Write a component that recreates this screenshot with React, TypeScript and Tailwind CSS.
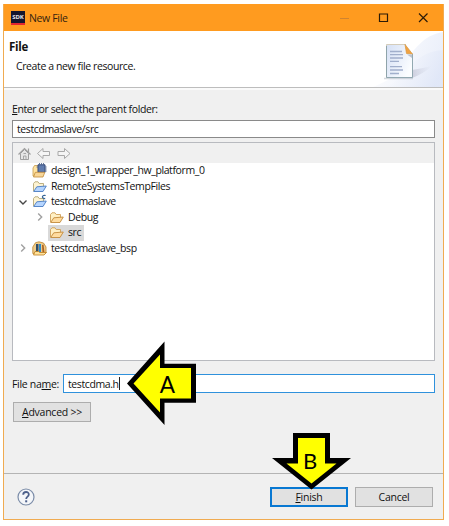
import type { ReactNode } from "react";

function SdkIcon() {
  return (
    <div className="flex h-[14px] w-[14px] flex-col bg-[#15162e]">
      <div className="flex h-[12px] items-center justify-center text-[6px] font-bold leading-none tracking-normal text-[#e4e4ea]">SDK</div>
      <div className="h-[2px] bg-[#e32530]" />
    </div>
  );
}

function WindowButtons() {
  return (
    <svg className="h-[26px] w-[110px]" viewBox="333 4 110 26" fill="none">
      <path d="M340 17.5h9" stroke="#d08430" />
      <path d="M379.5 13h8v7.5h-8z" stroke="#2b1b08" strokeWidth="1.2" />
      <path d="M419 12.5l8.5 8.5M427.5 12.5l-8.5 8.5" stroke="#2b1b08" strokeWidth="1.15" />
    </svg>
  );
}

function HeaderArt() {
  return (
    <svg className="h-[56px] w-[73px]" viewBox="370 31 73 56">
      <defs>
        <linearGradient id="sweep" x1="0" x2="1" y1="0.2" y2="0.5">
          <stop offset="0" stopColor="#ffffff" />
          <stop offset="1" stopColor="#dfe6f7" />
        </linearGradient>
        <linearGradient id="page" x1="0" x2="1" y1="0" y2="0.6">
          <stop offset="0" stopColor="#d5e0f5" />
          <stop offset="1" stopColor="#fbfdff" />
        </linearGradient>
        <linearGradient id="shade" x1="0" x2="1">
          <stop offset="0" stopColor="#a9a9bd" stopOpacity="0.8" />
          <stop offset="1" stopColor="#c5c9dc" stopOpacity="0" />
        </linearGradient>
      </defs>
      <path d="M443 32C423 35 414 50 402 66C396 78 384 82 373 87H443Z" fill="url(#sweep)" opacity="0.65" />
      <path d="M443 50C425 51 414 60 401 76C396 82 389 86 383 87H443Z" fill="url(#sweep)" opacity="0.85" />
      <path d="M412 70Q424 68 432 66Q423 74 412 78Z" fill="url(#shade)" opacity="0.6" />
      <path d="M384 78.5h29" stroke="#b8bfc8" strokeWidth="1.5" opacity="0.6" />
      <path d="M386.5 44.5H405.5L412.5 53V77.5H386.5Z" fill="url(#page)" />
      <path d="M386.5 77.5V44.5H406" fill="none" stroke="#d5cdbb" />
      <path d="M386.5 46V77.5H412.5V54" fill="none" stroke="#879fa8" strokeWidth="0.9" />
      <path d="M405 44.5L412.5 54L406.5 53.5Z" fill="#f1a344" stroke="#d9963c" strokeWidth="0.7" />
      <path d="M407 54.5L412 54.5V58Z" fill="#bac1d0" />
      <path d="M390 51.5h12M390 54.7h13M390 58h13M390 61.3h9M390 66.7h12M390 70h13M390 73.5h9" stroke="#a1afcc" strokeWidth="1.3" />
    </svg>
  );
}

function NavIcons() {
  return (
    <svg className="h-[20px] w-[66px]" viewBox="13 143 66 20" fill="none" stroke="#a0a0a0">
      <path d="M20.5 153.5v6h8v-6l-4-4Z" fill="#e6e6e6" />
      <path d="M18.5 154.5l6-6 6 6M28.500 148.5v4" strokeWidth="1.2" />
      <path d="M23.5 159.5v-3.500h2.500v3.500M23.500 153.500h2.500" strokeWidth="0.9" />
      <path d="M37.5 153.5l5.500-5v3h6.5v4H43v3Z" fill="#f5f5f5" stroke="#a9a9a9" />
      <path d="M70 153.5l-5.500-5v3H58v4h6.5v3Z" fill="#f5f5f5" stroke="#a9a9a9" />
    </svg>
  );
}

type FolderKind = "hardware" | "project" | "source" | "folder" | "bsp";

function FolderIcon({ kind }: { kind: FolderKind }) {
  if (kind === "hardware") {
    return (
      <svg className="h-[15px] w-[15px] shrink-0" viewBox="0 0 15 15">
        <path d="M1 13V5l1.5-2.500h4V13Z" fill="#ffe3a0" stroke="#c4994c" strokeWidth="0.8" />
        <path d="M6 1.8h7v7.500h-7z" fill="#607cae" stroke="#34497a" />
        <path d="M7.500 0v2M9.500 0v2M11.500 0v2M4.500 4h2M12.500 4h2.200M12.500 6h2.200M12.500 8h2.200" stroke="#53698f" strokeWidth="0.9" />
        <path d="M1.500 14L3.300 9.300h9.500L11 14Z" fill="#f8d698" stroke="#c08c38" strokeWidth="0.8" />
      </svg>
    );
  }
  if (kind === "bsp") {
    return (
      <svg className="h-[15px] w-[15px] shrink-0" viewBox="0 0 15 15">
        <path d="M.8 12.5V6l2.700-4.300L7 .8l4.500 1.200 2.500 4v6Z" fill="#efcc8b" stroke="#bd842b" strokeWidth="0.8" />
        <path d="M4 3h2.5v8H4z" fill="#304c68" />
        <path d="M7 3h2v8H7z" fill="#2e8bc9" />
        <path d="M10 4l1.5-.5 1 8h-2z" fill="#ac6221" />
        <path d="M1.500 14l1.500-3.500h3.500l1 1H14.500l-2.500 2.500Z" fill="#ffe29c" stroke="#bc7d20" strokeWidth="0.8" />
      </svg>
    );
  }
  const yellow = kind === "folder";
  return (
    <svg className="h-[15px] w-[15px] shrink-0" viewBox="0 0 15 15" strokeLinejoin="round" strokeWidth="0.9">
      <path d="M1.5 12V4.500l1.500-1.700h3l1.200 1.700h4.300v3.500" fill={yellow ? "#fff0c5" : "#fdf3d2"} stroke={yellow ? "#cf9f58" : "#b5a777"} />
      <path d="M1.700 12.500L4.800 7.800L14.300 7L11 12.500Z" fill={yellow ? "#ffdca0" : "#b5d5ff"} stroke={yellow ? "#c38b3c" : "#4a7cc2"} />
      {kind === "source" && <path d="M13.700 1.500C10 .3 9 5 13.200 4.500" fill="none" stroke="#376698" strokeWidth="1.3" />}
    </svg>
  );
}

function Chevron({ open }: { open: boolean }) {
  return (
    <svg className="h-[10px] w-[10px] shrink-0" viewBox="0 0 10 10" fill="none">
      <path d={open ? "M1.5 3.5L5 7L8.5 3.5" : "M3.2 1.5L6.7 5L3.2 8.5"} stroke={open ? "#484848" : "#a0a0a0"} strokeWidth="1.4" />
    </svg>
  );
}

function TreeRow({ kind, label, indent, open, selected }: {
  kind: FolderKind; label: string; indent: string; open?: boolean; selected?: boolean;
}) {
  return (
    <div className={"flex h-[15.5px] items-center " + indent}>
      <div className="w-[13px] shrink-0">{open !== undefined && <Chevron open={open} />}</div>
      <div className={"flex h-[15.5px] items-center gap-[4px] pl-[1px] pr-[3px] " + (selected ? "bg-[#d9d9d9]" : "")}>
        <FolderIcon kind={kind} />
        <span>{label}</span>
      </div>
    </div>
  );
}

function DialogButton({ children, primary }: { children: ReactNode; primary?: boolean }) {
  return (
    <button className={"flex h-[20px] w-[78px] items-center justify-center bg-[#e1e1e1] pt-px tracking-[-0.25px] " + (primary ? "border-2 border-[#0878d2]" : "border border-[#adadad]")}>
      {children}
    </button>
  );
}

function ArrowA() {
  return (
    <svg className="absolute left-[127px] top-[340px] h-[86px] w-[70px] tracking-normal" viewBox="127 340 70 86">
      <path d="M127 383.5L164.5 341.5V363.7H196V402.7H164.5V425Z" fill="#000" />
      <path d="M133.5 383.5L160 354.5V368H191V398.5H160V412.5Z" fill="#ff0" />
      <text x="167.3" y="393" textAnchor="middle" fontSize="22.5" fontFamily="Lato, sans-serif">A</text>
    </svg>
  );
}

function ArrowB() {
  return (
    <svg className="absolute left-[271px] top-[432px] h-[59px] w-[80px] tracking-normal" viewBox="271 432 80 59">
      <path d="M293 433H330V458H351L311.5 489.5L272 458H293Z" fill="#000" />
      <path d="M298 438H325V463.5H336.5L311.5 483.5L286.5 463.5H298Z" fill="#ff0" />
      <text x="310" y="468.8" textAnchor="middle" fontSize="22" fontFamily="Lato, sans-serif">B</text>
    </svg>
  );
}

export default function App() {
  return (
    <div className="relative h-[526px] w-[449px] overflow-hidden bg-white pl-[3px] pt-[4px] font-['Open_Sans','Noto_Sans',sans-serif] text-[10.5px] leading-[15px] tracking-[-0.4px] text-[#111]">
      <div className="flex h-[516px] w-[441px] flex-col border border-t-0 border-[#f0ab51] bg-[#f0f0f0]">
        <header className="flex h-[27px] shrink-0 items-center bg-[#ff9b1f] pl-[7px]">
          <SdkIcon />
          <span className="ml-[4px] pt-px tracking-[-0.35px] text-[#332310]">New File</span>
          <div className="ml-auto"><WindowButtons /></div>
        </header>
        <section className="flex h-[57px] shrink-0 justify-between border-b border-[#bdbdbd] bg-white pl-[5px]">
          <div className="pt-[8px]">
            <h1 className="text-[11.5px] font-bold tracking-[-0.3px]">File</h1>
            <p className="pl-[7px] pt-[5px]">Create a new file resource.</p>
          </div>
          <HeaderArt />
        </section>
        <div className="h-[2px] shrink-0 bg-[#fafafa]" />
        <main className="flex h-[384px] shrink-0 flex-col border-b border-[#b4b4b4] px-[8px] pt-[12px]">
          <label className="h-[18px]"><u>E</u>nter or select the parent folder:</label>
          <div className="flex h-[18px] shrink-0 items-center border border-[#8a8a8a] bg-white pl-[4px]"><span>testcdmaslave/src</span></div>
          <div className="mt-[4px] h-[219px] shrink-0 border border-[#b8babf] bg-white">
            <div className="h-[20px] bg-[#f0f0f0]"><NavIcons /></div>
            <div>
              <TreeRow kind="hardware" label="design_1_wrapper_hw_platform_0" indent="pl-[5px]" />
              <TreeRow kind="project" label="RemoteSystemsTempFiles" indent="pl-[5px]" />
              <TreeRow kind="source" label="testcdmaslave" indent="pl-[5px]" open />
              <TreeRow kind="folder" label="Debug" indent="pl-[22px]" open={false} />
              <TreeRow kind="folder" label="src" indent="pl-[22px]" selected />
              <TreeRow kind="bsp" label="testcdmaslave_bsp" indent="pl-[5px]" open={false} />
            </div>
          </div>
          <div className="mt-[13px] flex h-[19px] shrink-0 items-center">
            <label className="w-[51px] shrink-0 whitespace-nowrap pt-px tracking-[-0.3px]">File na<u>m</u>e:</label>
            <div className="flex h-[19px] grow items-center border border-[#2f91dc] bg-white pl-[4px]">
              <span className="pt-px">testcdma.h</span>
              <span className="h-[13px] w-px bg-[#222]" />
            </div>
          </div>
          <div className="mt-[9px] pl-[1px]"><DialogButton><span><u>A</u>dvanced &gt;&gt;</span></DialogButton></div>
        </main>
        <footer className="flex h-[45px] items-center pl-[13px] pr-[10px]">
          <svg className="h-[18px] w-[18px]" viewBox="0 0 18 18">
            <circle cx="9" cy="9" r="8" fill="#f4f6f9" stroke="#7b8ca8" strokeWidth="1.2" />
            <path d="M6.2 6.8C6.2 3 12 3.2 11.8 6.5C11.7 8.7 9.2 8.5 9.2 11" fill="none" stroke="#4c608b" strokeWidth="1.8" />
            <path d="M8.2 12.3h2v2h-2z" fill="#4c608b" />
          </svg>
          <div className="ml-auto flex gap-[7px]">
            <DialogButton primary><span><u>F</u>inish</span></DialogButton>
            <DialogButton><span>Cancel</span></DialogButton>
          </div>
        </footer>
      </div>
      <ArrowA />
      <ArrowB />
    </div>
  );
}
